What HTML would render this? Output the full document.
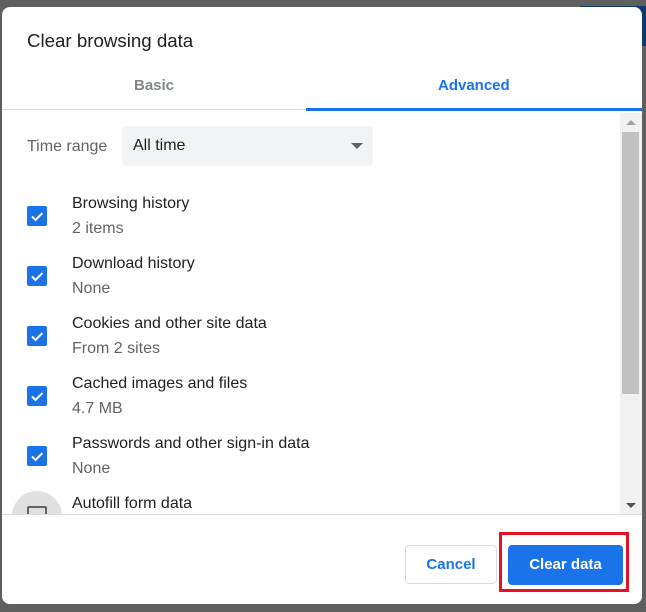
<!DOCTYPE html>
<html><head><meta charset="utf-8"><style>
*{margin:0;padding:0;box-sizing:border-box}
body{width:646px;height:612px;background:#5f5f5f;position:relative;overflow:hidden;font-family:"Liberation Sans",Arial,sans-serif}
.blue{position:absolute;left:580px;top:6px;width:66px;height:40px;background:#0d3a73}
.dlg{position:absolute;left:2px;top:7px;width:640px;height:597px;background:#fff;border-radius:8px;overflow:hidden}
.title{position:absolute;left:25px;top:23px;font-size:18.7px;color:#202124}
.tab{position:absolute;top:70px;font-size:15px;font-weight:bold}
.tabline{position:absolute;left:0;top:102px;width:640px;height:1px;background:#dadce0}
.ind{position:absolute;left:304px;top:101px;width:336px;height:3px;background:#1a73e8}
.tr{position:absolute;left:25px;top:131px;font-size:16px;color:#5f6368}
.sel{position:absolute;left:120px;top:119px;width:251px;height:40px;background:#f1f3f4;border-radius:4px}
.sel span{position:absolute;left:11px;top:11px;font-size:16px;color:#202124}
.sel i{position:absolute;right:10px;top:17px;border-left:6px solid transparent;border-right:6px solid transparent;border-top:6px solid #5f6368}
.item{position:absolute;left:70px;font-size:16px;color:#202124}
.sub{position:absolute;left:70px;font-size:16px;color:#5f6368}
.cb{position:absolute;left:25px;width:20px;height:20px;background:#1a73e8;border-radius:2px}
.cb svg{position:absolute;left:0;top:0}
.sb{position:absolute;left:618px;top:106px;width:22px;height:402px;background:#f1f1f1}
.thumb{position:absolute;left:2px;top:19px;width:17px;height:262px;background:#c1c1c1}
.foot{position:absolute;left:0;top:507px;width:640px;height:1px;background:#dadce0}
.cancel{position:absolute;left:405px;top:545px;width:92px;height:39px;border:1px solid #dadce0;border-radius:4px;color:#1a73e8;font-weight:bold;font-size:15px;text-align:center;line-height:37px}
.red{position:absolute;left:499px;top:532px;width:130px;height:60px;border:3px solid #e81123}
.clear{position:absolute;left:508px;top:545px;width:115px;height:40px;background:#1a73e8;border-radius:4px;color:#fff;font-weight:bold;font-size:15px;text-align:center;line-height:40px}
</style></head><body>
<div class="blue"></div>
<div class="dlg">
<div class="title">Clear browsing data</div>
<div class="tab" style="left:132px;color:#80868b">Basic</div>
<div class="tab" style="left:436px;color:#1a73e8">Advanced</div>
<div class="tabline"></div><div class="ind"></div>
<div class="tr">Time range</div>
<div class="sel"><span>All time</span><i></i></div>

<div class="cb" style="top:199px"><svg width="20" height="20"><path d="M5 10.5l3.5 3.5 7-7" stroke="#fff" stroke-width="2" fill="none"/></svg></div>
<div class="item" style="top:188px">Browsing history</div><div class="sub" style="top:213px">2 items</div>
<div class="cb" style="top:259px"><svg width="20" height="20"><path d="M5 10.5l3.5 3.5 7-7" stroke="#fff" stroke-width="2" fill="none"/></svg></div>
<div class="item" style="top:248px">Download history</div><div class="sub" style="top:273px">None</div>
<div class="cb" style="top:319px"><svg width="20" height="20"><path d="M5 10.5l3.5 3.5 7-7" stroke="#fff" stroke-width="2" fill="none"/></svg></div>
<div class="item" style="top:308px">Cookies and other site data</div><div class="sub" style="top:333px">From 2 sites</div>
<div class="cb" style="top:379px"><svg width="20" height="20"><path d="M5 10.5l3.5 3.5 7-7" stroke="#fff" stroke-width="2" fill="none"/></svg></div>
<div class="item" style="top:368px">Cached images and files</div><div class="sub" style="top:393px">4.7 MB</div>
<div class="cb" style="top:439px"><svg width="20" height="20"><path d="M5 10.5l3.5 3.5 7-7" stroke="#fff" stroke-width="2" fill="none"/></svg></div>
<div class="item" style="top:428px">Passwords and other sign-in data</div><div class="sub" style="top:453px">None</div>
<div style="position:absolute;left:10px;top:484px;width:50px;height:50px;border-radius:25px;background:#e0e0e0"></div>
<div style="position:absolute;left:25px;top:499px;width:20px;height:20px;border:2px solid #5f6368;border-radius:2px"></div>
<div class="item" style="top:488px">Autofill form data</div>
<div style="position:absolute;left:0;top:507px;width:640px;height:90px;background:#fff"></div>
<div class="sb"><div style="position:absolute;left:6px;top:7px;border-left:5px solid transparent;border-right:5px solid transparent;border-bottom:5px solid #a3a3a3"></div><div class="thumb"></div><div style="position:absolute;left:6px;top:390px;border-left:5px solid transparent;border-right:5px solid transparent;border-top:5px solid #505050"></div></div>
<div class="foot"></div>
</div>
<div class="cancel">Cancel</div>
<div class="red"></div>
<div class="clear">Clear data</div>
</body></html>
